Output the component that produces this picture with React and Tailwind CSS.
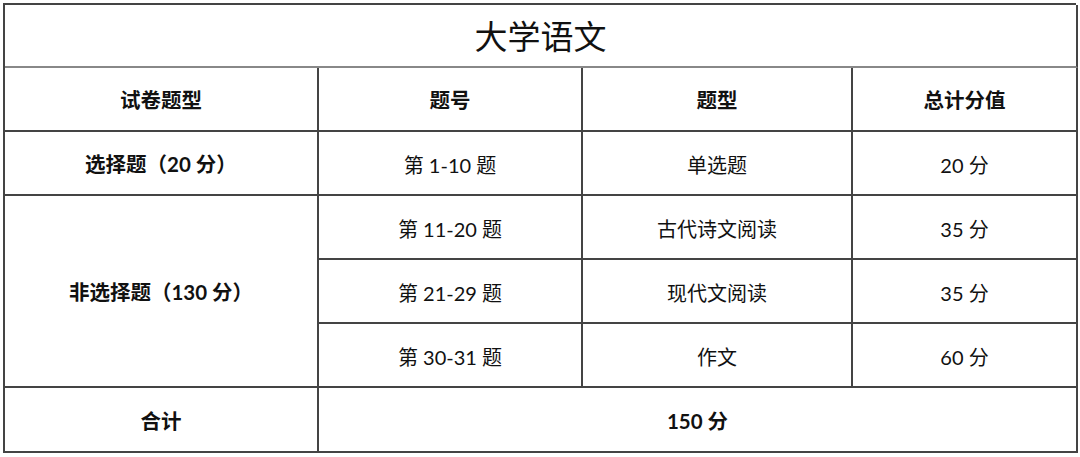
import React from 'react';

const font = { fontFamily: '"Lato", "Noto Sans CJK SC", sans-serif' };

const rows = [
  { no: '第 11-20 题', type: '古代诗文阅读', score: '35 分' },
  { no: '第 21-29 题', type: '现代文阅读', score: '35 分' },
  { no: '第 30-31 题', type: '作文', score: '60 分' },
];

function Cell({ children, className = '' }) {
  return (
    <div className={`flex items-center justify-center border-r-2 border-b-2 border-[#444] text-[#111] pt-[3px] ${className}`}>
      {children}
    </div>
  );
}

export default function App() {
  return (
    <div className="w-[1080px] h-[457px] bg-white pt-[3px] pl-[3px]" style={font}>
      <div className="w-[1073px] border-l-2 border-t-2 border-[#444] grid grid-cols-[314px_264px_270px_225px] grid-rows-[63px_64px_64px_64px_64px_64px_65px]">
        <div className="col-span-4 flex items-center justify-center border-r-2 border-b-2 border-r-[#444] border-b-[#888] text-[33px] text-[#111] pt-[2px]">
          大学语文
        </div>

        <Cell className="font-bold text-[20.5px]">试卷题型</Cell>
        <Cell className="font-bold text-[20.5px]">题号</Cell>
        <Cell className="font-bold text-[20.5px]">题型</Cell>
        <Cell className="font-bold text-[20.5px]">总计分值</Cell>

        <Cell className="font-bold text-[20.5px]">选择题（20 分）</Cell>
        <Cell className="text-[20px]">第 1-10 题</Cell>
        <Cell className="text-[20px]">单选题</Cell>
        <Cell className="text-[20px]">20 分</Cell>

        <Cell className="row-span-3 font-bold text-[20.5px]">非选择题（130 分）</Cell>
        {rows.map((r) => (
          <React.Fragment key={r.no}>
            <Cell className="text-[20px]">{r.no}</Cell>
            <Cell className="text-[20px]">{r.type}</Cell>
            <Cell className="text-[20px]">{r.score}</Cell>
          </React.Fragment>
        ))}

        <Cell className="font-bold text-[20.5px]">合计</Cell>
        <Cell className="col-span-3 font-bold text-[20.5px]">150 分</Cell>
      </div>
    </div>
  );
}
